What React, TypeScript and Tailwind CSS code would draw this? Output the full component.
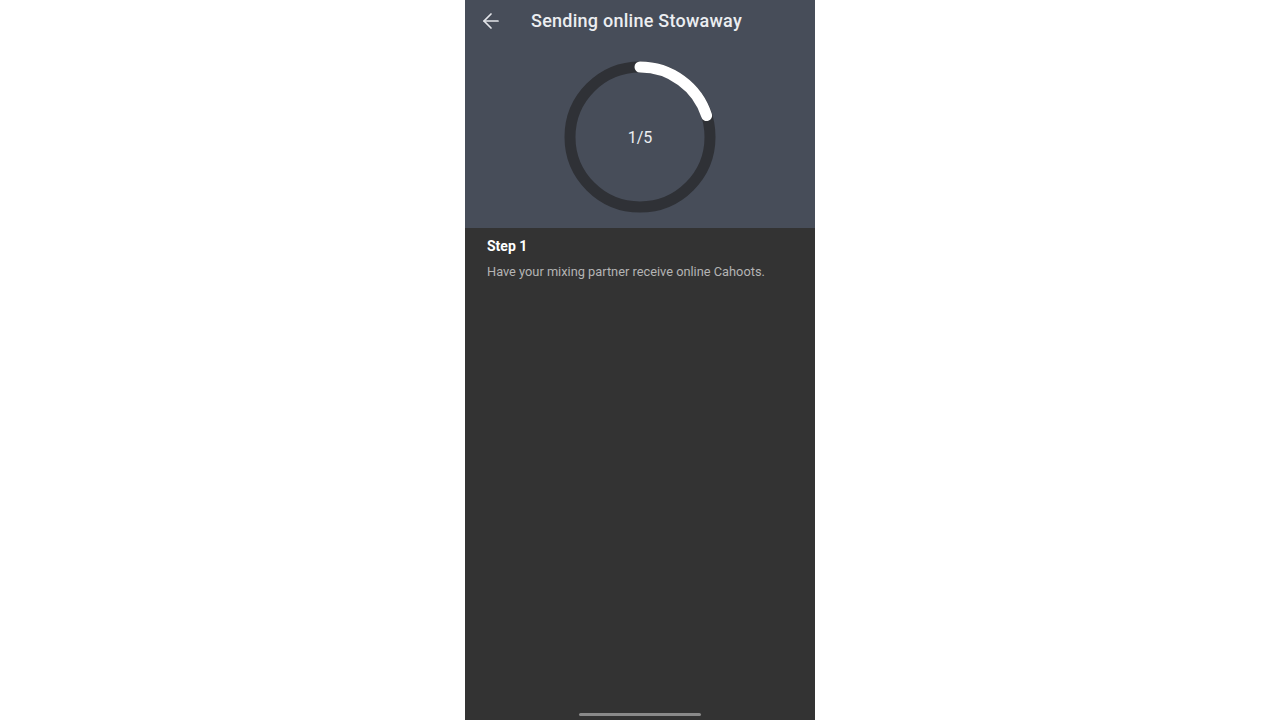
import React from "react";

export default function App() {
  const r = 70;
  const c = 2 * Math.PI * r;
  return (
    <div className="w-[1280px] h-[720px] bg-white flex justify-center" style={{ fontFamily: "Roboto, 'Noto Sans', sans-serif" }}>
      <div className="w-[350px] h-[720px] bg-[#333333] flex flex-col">
        <div className="h-[228px] bg-[#474d59] flex flex-col">
          <div className="h-[41px] flex items-center pl-[14px]">
            <svg width="24" height="24" viewBox="0 0 24 24" fill="none" stroke="#e4e6ea" strokeWidth="1.7" strokeLinecap="round" strokeLinejoin="round">
              <path d="M19 12H5" />
              <path d="M12 19l-7-7 7-7" />
            </svg>
            <span className="ml-[28px] text-[18px] text-[#eceef1] font-medium tracking-[0.25px]">Sending online Stowaway</span>
          </div>
          <div className="flex justify-center mt-[20px]">
            <div className="relative w-[152px] h-[152px]">
              <svg width="152" height="152" viewBox="0 0 152 152">
                <circle cx="76" cy="76" r={r} fill="none" stroke="#2f3136" strokeWidth="11" />
                <circle
                  cx="76"
                  cy="76"
                  r={r}
                  fill="none"
                  stroke="#ffffff"
                  strokeWidth="11"
                  strokeLinecap="round"
                  strokeDasharray={`${c / 5} ${c}`}
                  transform="rotate(-90 76 76)"
                />
              </svg>
              <div className="absolute inset-0 flex items-center justify-center text-[16px] text-[#eceef1] pt-[2px]">1/5</div>
            </div>
          </div>
        </div>
        <div className="px-[22px] pt-[9px] flex-1 flex flex-col">
          <div className="text-[14px] font-bold text-white leading-[18px]">Step 1</div>
          <div className="text-[12.8px] text-[#b4b4b4] mt-[8px] leading-[18px]">Have your mixing partner receive online Cahoots.</div>
          <div className="flex-1" />
          <div className="flex justify-center pb-[4px]">
            <div className="w-[122px] h-[3px] rounded-full bg-[#8a8a8a]" />
          </div>
        </div>
      </div>
    </div>
  );
}
